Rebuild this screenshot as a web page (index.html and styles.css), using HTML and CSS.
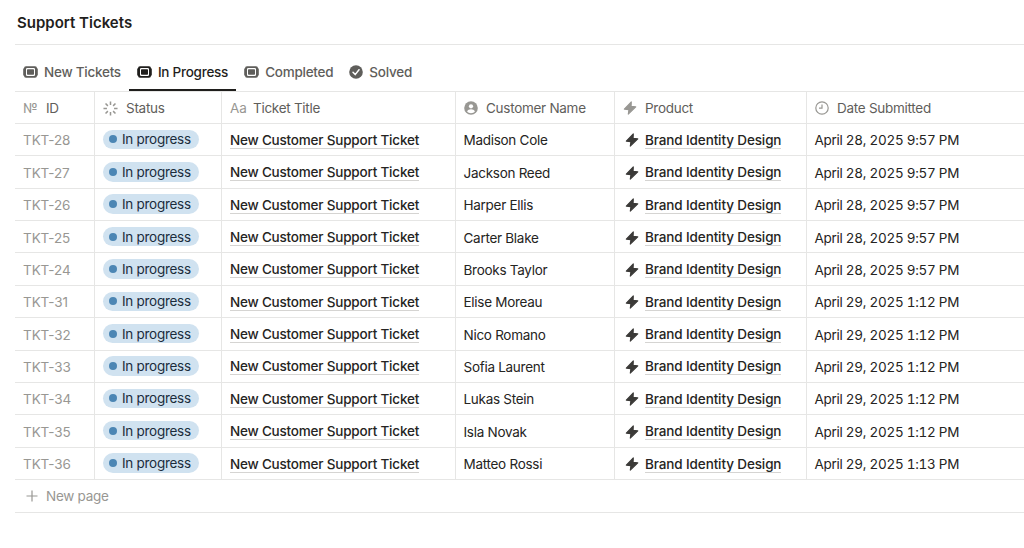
FILE: index.html
```html
<!DOCTYPE html>
<html lang="en">
<head>
  <meta charset="UTF-8">
  <meta name="viewport" content="width=device-width, initial-scale=1.0">
  <title>Support Tickets</title>
  <link rel="stylesheet" href="styles.css">
</head>
<body>
  <svg class="sprite" aria-hidden="true">
    <symbol id="ticket" viewBox="0 0 15 12">
      <path fill-rule="evenodd" d="M3 .3h9a2 2 0 0 1 2 2 1 1 0 0 1 .8 1v5.400a1 1 0 0 1-.8 1 2 2 0 0 1-2 2H3a2 2 0 0 1-2-2 1 1 0 0 1-.8-1V3.300a1 1 0 0 1 .8-1 2 2 0 0 1 2-2zM4.200 2.100a1.200 1.200 0 0 0-1.200 1.200v5.400a1.200 1.200 0 0 0 1.200 1.200h6.600a1.200 1.200 0 0 0 1.200-1.200V3.300a1.200 1.200 0 0 0-1.200-1.200z"/>
      <rect x="4" y="3.200" width="7" height="5.600" rx=".7"/>
    </symbol>
    <symbol id="check" viewBox="0 0 14 14">
      <circle cx="7" cy="7" r="6.800"/>
      <path d="M4 7.300l2.200 2.300L10 4.700" fill="none" stroke="#fff" stroke-width="1.500" stroke-linecap="round" stroke-linejoin="round"/>
    </symbol>
    <symbol id="bolt" viewBox="0 0 14 16">
      <path d="M8.300 1.900L1.300 9.100l4.600.5-.6 4.500 7.500-7.200-4.700-.5z" stroke="currentColor" stroke-width="1.100" stroke-linejoin="round"/>
    </symbol>
    <symbol id="person" viewBox="0 0 14 14">
      <circle cx="7" cy="7" r="6.800"/>
      <circle cx="7" cy="5.300" r="2.100" fill="#fff"/>
      <path d="M3.100 10.600c.6-1.600 2.100-2.300 3.900-2.300s3.300.700 3.900 2.300c-1 1-2.300 1.600-3.900 1.600s-2.900-.6-3.900-1.600z" fill="#fff"/>
    </symbol>
    <symbol id="clock" viewBox="0 0 14 14">
      <path d="M7 .8a6.200 6.200 0 1 0 0 12.400A6.200 6.200 0 0 0 7 .8zM7 3.600V7.200H4" fill="none" stroke="currentColor" stroke-width="1.200"/>
    </symbol>
    <symbol id="spinner" viewBox="0 0 16 16">
      <path d="M8 .5v3.700M8 11.800v3.700M.5 8h3.700M11.800 8h3.700M2.700 2.700l2.500 2.500M10.800 10.800l2.500 2.500M2.700 13.300l2.500-2.500M10.800 5.200l2.500-2.500" fill="none" stroke="currentColor" stroke-width="1.600"/>
    </symbol>
    <symbol id="plus" viewBox="0 0 12 12">
      <path d="M6 .5v11M.5 6h11" fill="none" stroke="currentColor" stroke-width="1.200"/>
    </symbol>
  </svg>

  <main class="database">
    <h1 class="title">Support Tickets</h1>

    <nav class="tabs">
      <a class="tab"><svg class="icon ticket"><use href="#ticket"/></svg>New Tickets</a>
      <a class="tab active"><svg class="icon ticket"><use href="#ticket"/></svg>In Progress</a>
      <a class="tab"><svg class="icon ticket"><use href="#ticket"/></svg>Completed</a>
      <a class="tab"><svg class="icon check"><use href="#check"/></svg>Solved</a>
    </nav>

    <div class="table">
      <div class="row head">
        <div class="cell"><span class="glyph">№</span>ID</div>
        <div class="cell"><svg class="icon spinner"><use href="#spinner"/></svg>Status</div>
        <div class="cell"><span class="glyph">Aa</span>Ticket Title</div>
        <div class="cell"><svg class="icon person"><use href="#person"/></svg>Customer Name</div>
        <div class="cell"><svg class="icon bolt"><use href="#bolt"/></svg>Product</div>
        <div class="cell"><svg class="icon clock"><use href="#clock"/></svg>Date Submitted</div>
      </div>
      <div class="row">
        <div class="cell id">TKT-28</div>
        <div class="cell"><span class="status">In progress</span></div>
        <div class="cell"><a class="link">New Customer Support Ticket</a></div>
        <div class="cell">Madison Cole</div>
        <div class="cell"><svg class="icon bolt"><use href="#bolt"/></svg><a class="link product">Brand Identity Design</a></div>
        <div class="cell date">April 28, 2025 9:57 PM</div>
      </div>
      <div class="row">
        <div class="cell id">TKT-27</div>
        <div class="cell"><span class="status">In progress</span></div>
        <div class="cell"><a class="link">New Customer Support Ticket</a></div>
        <div class="cell">Jackson Reed</div>
        <div class="cell"><svg class="icon bolt"><use href="#bolt"/></svg><a class="link product">Brand Identity Design</a></div>
        <div class="cell date">April 28, 2025 9:57 PM</div>
      </div>
      <div class="row">
        <div class="cell id">TKT-26</div>
        <div class="cell"><span class="status">In progress</span></div>
        <div class="cell"><a class="link">New Customer Support Ticket</a></div>
        <div class="cell">Harper Ellis</div>
        <div class="cell"><svg class="icon bolt"><use href="#bolt"/></svg><a class="link product">Brand Identity Design</a></div>
        <div class="cell date">April 28, 2025 9:57 PM</div>
      </div>
      <div class="row">
        <div class="cell id">TKT-25</div>
        <div class="cell"><span class="status">In progress</span></div>
        <div class="cell"><a class="link">New Customer Support Ticket</a></div>
        <div class="cell">Carter Blake</div>
        <div class="cell"><svg class="icon bolt"><use href="#bolt"/></svg><a class="link product">Brand Identity Design</a></div>
        <div class="cell date">April 28, 2025 9:57 PM</div>
      </div>
      <div class="row">
        <div class="cell id">TKT-24</div>
        <div class="cell"><span class="status">In progress</span></div>
        <div class="cell"><a class="link">New Customer Support Ticket</a></div>
        <div class="cell">Brooks Taylor</div>
        <div class="cell"><svg class="icon bolt"><use href="#bolt"/></svg><a class="link product">Brand Identity Design</a></div>
        <div class="cell date">April 28, 2025 9:57 PM</div>
      </div>
      <div class="row">
        <div class="cell id">TKT-31</div>
        <div class="cell"><span class="status">In progress</span></div>
        <div class="cell"><a class="link">New Customer Support Ticket</a></div>
        <div class="cell">Elise Moreau</div>
        <div class="cell"><svg class="icon bolt"><use href="#bolt"/></svg><a class="link product">Brand Identity Design</a></div>
        <div class="cell date">April 29, 2025 1:12 PM</div>
      </div>
      <div class="row">
        <div class="cell id">TKT-32</div>
        <div class="cell"><span class="status">In progress</span></div>
        <div class="cell"><a class="link">New Customer Support Ticket</a></div>
        <div class="cell">Nico Romano</div>
        <div class="cell"><svg class="icon bolt"><use href="#bolt"/></svg><a class="link product">Brand Identity Design</a></div>
        <div class="cell date">April 29, 2025 1:12 PM</div>
      </div>
      <div class="row">
        <div class="cell id">TKT-33</div>
        <div class="cell"><span class="status">In progress</span></div>
        <div class="cell"><a class="link">New Customer Support Ticket</a></div>
        <div class="cell">Sofia Laurent</div>
        <div class="cell"><svg class="icon bolt"><use href="#bolt"/></svg><a class="link product">Brand Identity Design</a></div>
        <div class="cell date">April 29, 2025 1:12 PM</div>
      </div>
      <div class="row">
        <div class="cell id">TKT-34</div>
        <div class="cell"><span class="status">In progress</span></div>
        <div class="cell"><a class="link">New Customer Support Ticket</a></div>
        <div class="cell">Lukas Stein</div>
        <div class="cell"><svg class="icon bolt"><use href="#bolt"/></svg><a class="link product">Brand Identity Design</a></div>
        <div class="cell date">April 29, 2025 1:12 PM</div>
      </div>
      <div class="row">
        <div class="cell id">TKT-35</div>
        <div class="cell"><span class="status">In progress</span></div>
        <div class="cell"><a class="link">New Customer Support Ticket</a></div>
        <div class="cell">Isla Novak</div>
        <div class="cell"><svg class="icon bolt"><use href="#bolt"/></svg><a class="link product">Brand Identity Design</a></div>
        <div class="cell date">April 29, 2025 1:12 PM</div>
      </div>
      <div class="row">
        <div class="cell id">TKT-36</div>
        <div class="cell"><span class="status">In progress</span></div>
        <div class="cell"><a class="link">New Customer Support Ticket</a></div>
        <div class="cell">Matteo Rossi</div>
        <div class="cell"><svg class="icon bolt"><use href="#bolt"/></svg><a class="link product">Brand Identity Design</a></div>
        <div class="cell date">April 29, 2025 1:13 PM</div>
      </div>
      <div class="new-page"><svg class="icon plus"><use href="#plus"/></svg>New page</div>
    </div>
  </main>
</body>
</html>
```

FILE: styles.css
```css
* {
  box-sizing: border-box;
}

body {
  margin: 0;
  background: #fff;
  color: #252422;
  font-family: Inter, "Liberation Sans", sans-serif;
  font-size: 13.5px;
  letter-spacing: -0.28px;
  line-height: 20px;
  overflow: hidden;
}

.sprite {
  display: none;
}

.database {
  padding-left: 15px;
}

.title {
  height: 45px;
  margin: 0;
  padding: 13px 2px 0;
  border-bottom: 1px solid #e6e6e5;
  font-size: 15px;
  font-weight: 600;
  letter-spacing: 0;
  color: #1f1e1c;
}

.icon {
  flex: none;
  display: block;
  fill: currentColor;
}

.tabs {
  display: flex;
  height: 47px;
  border-bottom: 1px solid #e6e6e5;
  color: #5f5e5b;
  font-weight: 500;
  letter-spacing: -0.250px;
}

.tab {
  display: flex;
  align-items: center;
  gap: 6px;
  height: 46px;
  padding: 9px 8px 0;
  border-bottom: 2px solid transparent;
}

.tab.active {
  color: #1f1e1c;
  border-bottom-color: #1f1e1c;
}

.ticket {
  width: 15px;
  height: 12px;
}

.check {
  width: 14px;
  height: 14px;
}

.row {
  display: grid;
  grid-template-columns: 80px 127px 234px 159px 192px 1fr;
  height: 32.370px;
  border-bottom: 1px solid #e6e6e5;
}

.cell {
  display: flex;
  align-items: center;
  padding: 1.600px 8px 0 7.500px;
  border-right: 1px solid #e6e6e5;
  white-space: nowrap;
}

.cell:last-child {
  border-right: 0;
}

.head {
  height: 32px;
  color: #5f5e5b;
}

.head .cell {
  padding-top: 1px;
  padding-left: 8px;
}

.head .icon,
.glyph {
  color: #989793;
}

.glyph {
  width: 23px;
  letter-spacing: 0;
}

.spinner {
  width: 15px;
  height: 15px;
  margin-right: 8px;
}

.person,
.clock {
  width: 14px;
  height: 14px;
  margin-right: 8px;
}

.bolt {
  width: 14px;
  height: 16px;
  margin: 0 6px 0 2px;
  color: #3b3a38;
}

.head .bolt {
  margin: 0 8px 0 0;
}

.cell.id {
  padding-left: 8px;
  color: #989793;
  letter-spacing: -0.080px;
}

.date {
  font-variant-numeric: tabular-nums;
}

.status {
  display: flex;
  align-items: center;
  gap: 5px;
  height: 19.500px;
  margin: 0 0 2px 0.500px;
  padding: 0 8px 0 6px;
  border-radius: 10px;
  background: #d0e2f0;
  color: #1b2d3d;
}

.status::before {
  content: "";
  width: 8px;
  height: 8px;
  border-radius: 50%;
  background: #4c86b4;
}

.link {
  height: 17px;
  margin-left: 0.500px;
  border-bottom: 1px solid #d5d4d2;
  font-weight: 500;
  letter-spacing: -0.200px;
  line-height: 17px;
}

.product {
  letter-spacing: -0.120px;
}

.new-page {
  display: flex;
  align-items: center;
  gap: 8px;
  height: 33px;
  padding: 1px 0 0 11px;
  border-bottom: 1px solid #e6e6e5;
  color: #989793;
}

.plus {
  width: 12px;
  height: 12px;
}
```
